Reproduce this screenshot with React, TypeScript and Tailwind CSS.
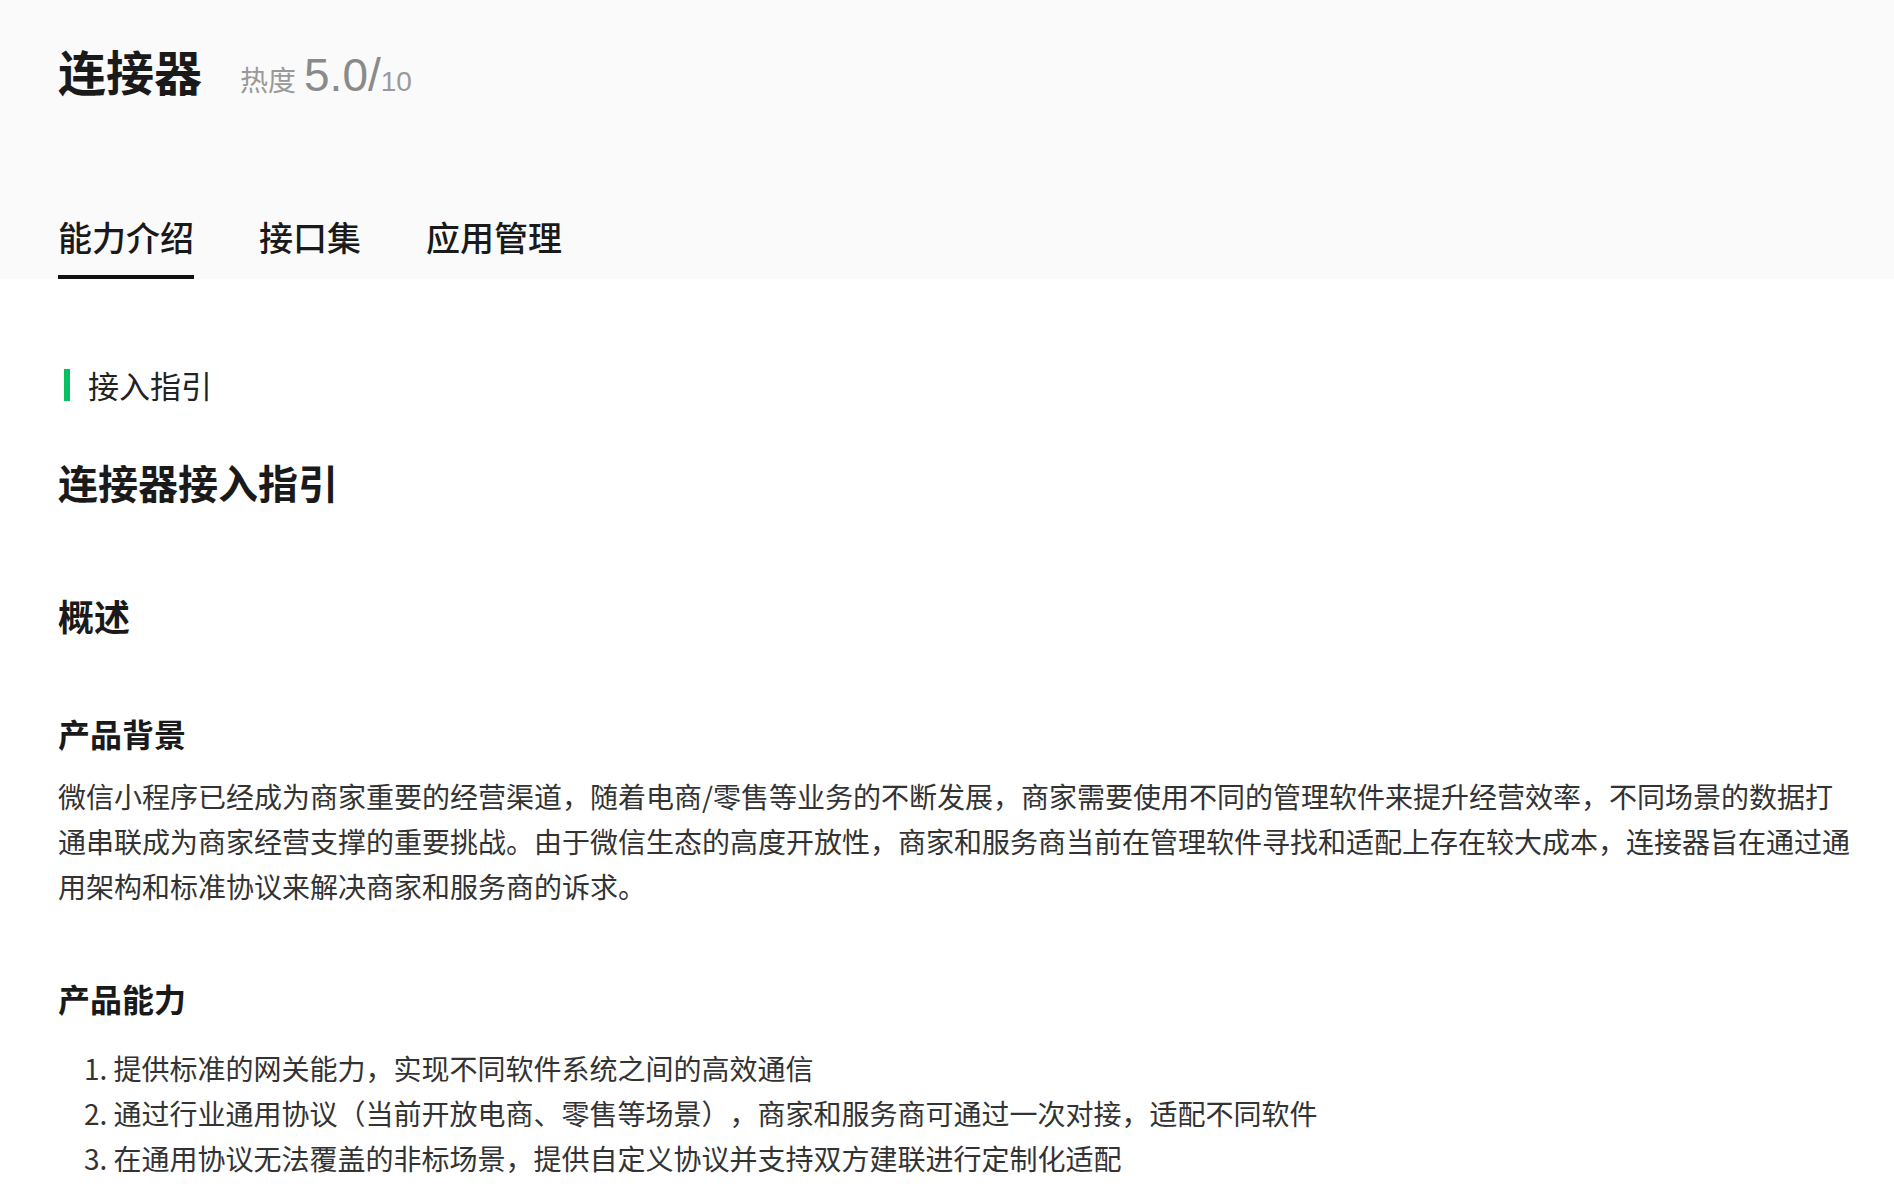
const font = { fontFamily: '"Noto Sans CJK SC", "Noto Sans", sans-serif' };
const num = { fontFamily: '"Liberation Sans", Arial, sans-serif' };

const tabs = ["能力介绍", "接口集", "应用管理"];

const abilities = [
  "提供标准的网关能力，实现不同软件系统之间的高效通信",
  "通过行业通用协议（当前开放电商、零售等场景），商家和服务商可通过一次对接，适配不同软件",
  "在通用协议无法覆盖的非标场景，提供自定义协议并支持双方建联进行定制化适配",
];

export default function App() {
  return (
    <div className="min-h-[1200px] bg-white text-[#1a1a1a] [text-spacing-trim:space-all]" style={font}>
      {/* 顶部信息 */}
      <div className="bg-[#fafafa] px-[58px] pt-[37px]">
        <div className="flex h-[67px] items-baseline">
          <h1 className="text-[48px] leading-[67px] font-semibold">连接器</h1>
          <div className="ml-[38px] flex items-baseline leading-none text-[#999]">
            <span className="text-[28px] leading-none">热度</span>
            <span className="ml-[8px] text-[46px] leading-none text-[#8a8a8a]" style={num}>5.0/</span>
            <span className="text-[28px] leading-none text-[#999]" style={num}>10</span>
          </div>
        </div>
        <div className="mt-[109px] flex gap-[65px]">
          {tabs.map((t, i) => (
            <div
              key={t}
              className={
                i === 0
                  ? "border-b-4 border-[#111] pb-[14px] text-[34px] leading-[48px] font-medium"
                  : "border-b-4 border-transparent pb-[14px] text-[34px] leading-[48px] font-medium"
              }
            >
              {t}
            </div>
          ))}
        </div>
      </div>

      {/* 正文 */}
      <div className="w-[1854px] px-[58px] text-[#333]">
        <div className="mt-[85px] flex items-center pl-[6px]">
          <span className="h-[32px] w-[6px] bg-[#07c160]" />
          <span className="ml-[18px] text-[31px] leading-[42px] text-[#222]">接入指引</span>
        </div>
        <h2 className="mt-[48px] text-[40px] leading-[56px] font-semibold text-[#1a1a1a]">连接器接入指引</h2>
        <h3 className="mt-[80px] text-[36px] leading-[50px] font-semibold text-[#1a1a1a]">概述</h3>

        <h4 className="mt-[71px] text-[32px] leading-[44px] font-semibold text-[#1a1a1a]">产品背景</h4>
        <p className="mt-[19px] w-[1796px] text-[28px] leading-[1.6]">
          微信小程序已经成为商家重要的经营渠道，随着电商/零售等业务的不断发展，商家需要使用不同的管理软件来提升经营效率，不同场景的数据打通串联成为商家经营支撑的重要挑战。由于微信生态的高度开放性，商家和服务商当前在管理软件寻找和适配上存在较大成本，连接器旨在通过通用架构和标准协议来解决商家和服务商的诉求。
        </p>

        <h4 className="mt-[68px] text-[32px] leading-[44px] font-semibold text-[#1a1a1a]">产品能力</h4>
        <ol className="mt-[26px] list-inside list-decimal pl-[26px] text-[28px] leading-[1.6]">
          {abilities.map((a) => (
            <li key={a}>{a}</li>
          ))}
        </ol>
      </div>
    </div>
  );
}
